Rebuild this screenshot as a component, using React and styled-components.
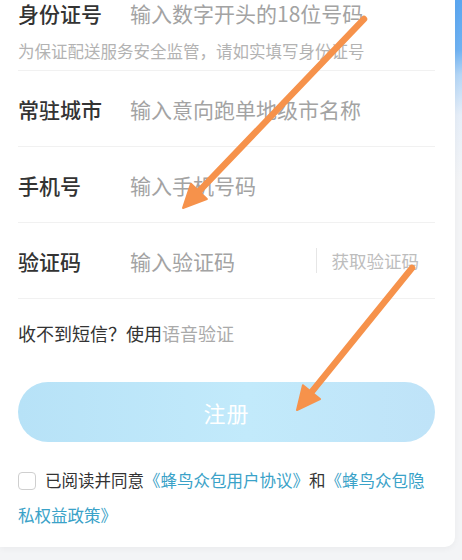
import React from "react";
import styled, { createGlobalStyle } from "styled-components";

const GlobalStyle = createGlobalStyle`
  html, body { margin: 0; padding: 0; }
  body {
    font-family: "Noto Sans CJK SC", "Noto Sans", sans-serif;
    background: #f3f4f6;
  }
`;

const Page = styled.div`
  position: relative;
  width: 462px;
  height: 560px;
  overflow: hidden;
  background: linear-gradient(180deg, #5aa6f0 0px, #6fb2f2 50px, #b4d6f6 75px, #e6eef8 115px, #f3f4f6 180px);
  display: flex;
  flex-direction: column;
`;

const Card = styled.div`
  width: 455px;
  box-sizing: border-box;
  background: #ffffff;
  border-radius: 0 0 10px 0;
  box-shadow: 0 2px 6px rgba(0, 0, 0, 0.04);
  padding: 0 20px 14px 18px;
  display: flex;
  flex-direction: column;
`;

const Field = styled.div`
  display: flex;
  flex-direction: column;
  box-sizing: border-box;
  height: ${(p) => (p.$first ? "71px" : "76px")};
  padding-bottom: ${(p) => (p.$first ? "7px" : "0")};
  border-bottom: 1px solid #f1f1f1;
  justify-content: ${(p) => (p.$first ? "flex-end" : "center")};
`;

const InputLine = styled.div`
  display: flex;
  align-items: center;
  height: 26px;
`;

const Label = styled.span`
  width: 112px;
  flex: none;
  font-size: 21px;
  font-weight: 500;
  color: #333333;
  line-height: 26px;
`;

const TextInput = styled.input`
  flex: 1;
  min-width: 0;
  border: none;
  outline: none;
  padding: 0;
  background: transparent;
  font-family: inherit;
  font-size: 21px;
  line-height: 26px;
  color: #333;
  &::placeholder { color: #a3a3a3; }
`;

const Hint = styled.div`
  margin-top: 13px;
  font-size: 16.5px;
  line-height: 24px;
  color: #b3b3b3;
`;

const CodeButton = styled.button`
  flex: none;
  border: none;
  background: transparent;
  border-left: 1px solid #e6e6e6;
  height: 25px;
  padding: 0 0 0 15px;
  margin-right: 16px;
  font-family: inherit;
  font-size: 17.5px;
  color: #bdbdbd;
  line-height: 25px;
`;

const VoiceLine = styled.div`
  margin-top: 22px;
  font-size: 18px;
  line-height: 24px;
  color: #333333;
`;

const Muted = styled.span`
  color: #aaaaaa;
`;

const SubmitButton = styled.button`
  margin-top: 37px;
  height: 60px;
  width: 100%;
  border: none;
  border-radius: 30px;
  background: linear-gradient(90deg, #b7e2f7 0%, #c2eafb 55%, #bfe3f8 100%);
  color: #ffffff;
  font-family: inherit;
  font-size: 22px;
  letter-spacing: 1px;
`;

const Agreement = styled.p`
  margin: 21px 0 0 0;
  font-size: 16.5px;
  line-height: 35px;
  color: #333333;
`;

const CheckBox = styled.span`
  display: inline-block;
  box-sizing: border-box;
  width: 18px;
  height: 18px;
  border: 1px solid #cfcfcf;
  border-radius: 4px;
  vertical-align: -3px;
  margin-right: 9px;
`;

const Link = styled.span`
  color: #3aa2c8;
`;

const Overlay = styled.svg`
  position: absolute;
  left: 0;
  top: 0;
  pointer-events: none;
`;

function Arrow({ x1, y1, x2, y2 }) {
  const dx = x2 - x1;
  const dy = y2 - y1;
  const len = Math.hypot(dx, dy);
  const ux = dx / len;
  const uy = dy / len;
  const hl = 23;
  const hw = 11;
  const bx = x2 - ux * hl;
  const by = y2 - uy * hl;
  const px = -uy;
  const py = ux;
  const pts = `${x2},${y2} ${bx + px * hw},${by + py * hw} ${bx - px * hw},${by - py * hw}`;
  return (
    <g>
      <line x1={x1} y1={y1} x2={bx + ux * 4} y2={by + uy * 4} stroke="#f6924b" strokeWidth="6.5" strokeLinecap="round" />
      <polygon points={pts} fill="#f6924b" stroke="#f6924b" strokeWidth="2" strokeLinejoin="round" />
    </g>
  );
}

export default function App() {
  return (
    <>
      <GlobalStyle />
      <Page>
        <Card>
          <Field $first>
            <InputLine>
              <Label>身份证号</Label>
              <TextInput placeholder="输入数字开头的18位号码" />
            </InputLine>
            <Hint>为保证配送服务安全监管，请如实填写身份证号</Hint>
          </Field>
          <Field>
            <InputLine>
              <Label>常驻城市</Label>
              <TextInput placeholder="输入意向跑单地级市名称" />
            </InputLine>
          </Field>
          <Field>
            <InputLine>
              <Label>手机号</Label>
              <TextInput placeholder="输入手机号码" />
            </InputLine>
          </Field>
          <Field>
            <InputLine>
              <Label>验证码</Label>
              <TextInput placeholder="输入验证码" />
              <CodeButton>获取验证码</CodeButton>
            </InputLine>
          </Field>
          <VoiceLine>
            收不到短信？使用<Muted>语音验证</Muted>
          </VoiceLine>
          <SubmitButton>注册</SubmitButton>
          <Agreement>
            <CheckBox />
            已阅读并同意<Link>《蜂鸟众包用户协议》</Link>和<Link>《蜂鸟众包隐私权益政策》</Link>
          </Agreement>
        </Card>
        <Overlay width="462" height="560" viewBox="0 0 462 560">
          <Arrow x1={364} y1={19} x2={183} y2={208} />
          <Arrow x1={412} y1={268} x2={297} y2={410} />
        </Overlay>
      </Page>
    </>
  );
}
